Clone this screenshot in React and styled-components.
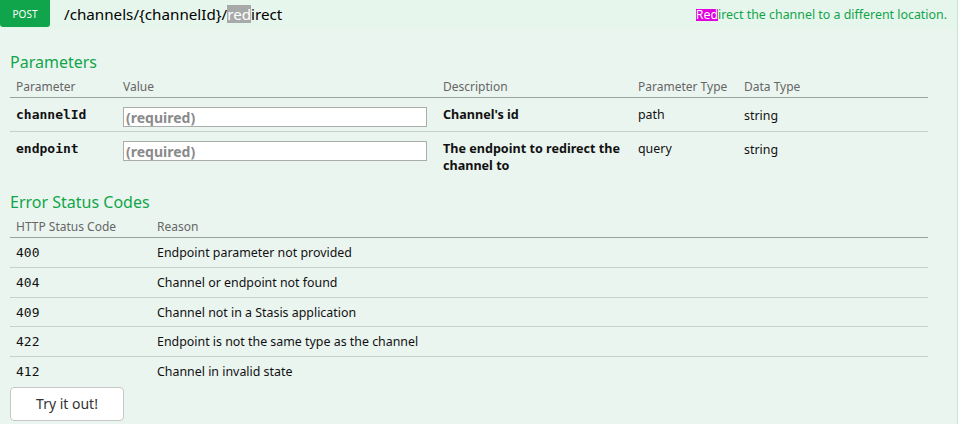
import React from 'react';
import styled, { createGlobalStyle } from 'styled-components';

const GlobalStyle = createGlobalStyle`
  html, body {
    margin: 0;
    padding: 0;
    background: #ffffff;
    font-family: "Noto Sans", "Open Sans", sans-serif;
  }
`;

const green = '#10a54a';

const Operation = styled.div`
  width: 958px;
  height: 424px;
  box-sizing: border-box;
  background: #ebf5f0;
  border-right: 1px solid #c3e8d1;
  overflow: hidden;
`;

const Heading = styled.div`
  display: flex;
  align-items: flex-start;
  height: 29px;
  background: #e7f6ec;
`;

const Method = styled.span`
  display: flex;
  align-items: center;
  justify-content: center;
  width: 50px;
  height: 27px;
  background: ${green};
  color: #ffffff;
  font-size: 10px;
  border-radius: 0 0 3px 3px;
`;

const Path = styled.span`
  margin-left: 14px;
  margin-top: 4px;
  font-size: 15.2px;
  line-height: 21px;
  color: #000;
`;

const Mark = styled.span`
  display: inline-block;
  line-height: ${(p) => p.$h}px;
  background: ${(p) => p.$bg};
  color: #ffffff;
`;

const Summary = styled.span`
  margin-left: auto;
  margin-right: 10px;
  margin-top: 6px;
  font-size: 12.4px;
  line-height: 18px;
  color: ${green};
`;

const Content = styled.div`
  padding: 0 30px 0 10px;
`;

const SectionTitle = styled.h4`
  margin: 0;
  font-size: 16px;
  font-weight: normal;
  line-height: 24px;
  color: ${green};
  padding-top: ${(p) => p.$top}px;
`;

const Table = styled.table`
  width: 918px;
  border-collapse: collapse;
  table-layout: fixed;
`;

const Th = styled.th`
  text-align: left;
  font-weight: normal;
  font-size: 12px;
  color: #666;
  padding: 5px 6px 2px;
  line-height: 16px;
  border-bottom: 1px solid #99a39e;
`;

const Tr = styled.tr`
  border-bottom: ${(p) => (p.$last ? 'none' : '1px solid #c8d0cc')};
`;

const Td = styled.td`
  vertical-align: top;
  padding: ${(p) => p.$pad || '8px 6px 4px'};
  font-size: ${(p) => (p.$bold ? '12.6px' : '12.4px')};
  line-height: ${(p) => p.$lh || 17}px;
  color: #111;
  font-weight: ${(p) => (p.$bold ? 'bold' : 'normal')};
`;

const Code = styled.span`
  font-family: "DejaVu Sans Mono", monospace;
  font-size: 13px;
  font-weight: ${(p) => (p.$bold ? 'bold' : 'normal')};
`;

const Input = styled.input`
  display: block;
  box-sizing: border-box;
  width: 304px;
  height: 20px;
  margin: 1px 0 0;
  padding: 0 2px;
  border: 1px solid #a9aeab;
  background: #fff;
  font-family: "Noto Sans", sans-serif;
  font-size: 14px;
  font-weight: bold;
  &::placeholder {
    color: #8a8a8a;
  }
`;

const Button = styled.button`
  display: block;
  margin-top: 1px;
  width: 114px;
  height: 34px;
  background: #ffffff;
  border: 1px solid #c7c7c7;
  border-radius: 4px;
  font-family: "Noto Sans", sans-serif;
  font-size: 14px;
  color: #333;
`;

const params = [
  { name: 'channelId', desc: "Channel's id", type: 'path', data: 'string' },
  { name: 'endpoint', desc: 'The endpoint to redirect the channel to', type: 'query', data: 'string' },
];

const errors = [
  ['400', 'Endpoint parameter not provided'],
  ['404', 'Channel or endpoint not found'],
  ['409', 'Channel not in a Stasis application'],
  ['422', 'Endpoint is not the same type as the channel'],
  ['412', 'Channel in invalid state'],
];

export default function App() {
  return (
    <>
      <GlobalStyle />
      <Operation>
        <Heading>
          <Method>POST</Method>
          <Path>
            /channels/{'{channelId}'}/<Mark $bg="#a8aaa9" $h={18}>red</Mark>irect
          </Path>
          <Summary>
            <Mark $bg="#e000e0" $h={12}>Red</Mark>irect the channel to a different location.
          </Summary>
        </Heading>
        <Content>
          <SectionTitle $top={21}>Parameters</SectionTitle>
          <Table>
            <colgroup>
              <col style={{ width: 107 }} />
              <col style={{ width: 320 }} />
              <col style={{ width: 195 }} />
              <col style={{ width: 106 }} />
              <col />
            </colgroup>
            <thead>
              <tr>
                <Th>Parameter</Th>
                <Th>Value</Th>
                <Th>Description</Th>
                <Th>Parameter Type</Th>
                <Th>Data Type</Th>
              </tr>
            </thead>
            <tbody>
              {params.map((p, i) => (
                <Tr key={p.name} $last={i === params.length - 1}>
                  <Td><Code $bold>{p.name}</Code></Td>
                  <Td><Input placeholder="(required)" /></Td>
                  <Td $bold>{p.desc}</Td>
                  <Td>{p.type}</Td>
                  <Td $pad="9px 6px 4px">{p.data}</Td>
                </Tr>
              ))}
            </tbody>
          </Table>
          <SectionTitle $top={12}>Error Status Codes</SectionTitle>
          <Table>
            <colgroup>
              <col style={{ width: 141 }} />
              <col />
            </colgroup>
            <thead>
              <tr>
                <Th>HTTP Status Code</Th>
                <Th>Reason</Th>
              </tr>
            </thead>
            <tbody>
              {errors.map(([code, reason], i) => (
                <Tr key={code} $last={i === errors.length - 1}>
                  <Td $pad="7px 6px 5px" $lh={16.75}><Code>{code}</Code></Td>
                  <Td $pad="7px 6px 5px" $lh={16.75}>{reason}</Td>
                </Tr>
              ))}
            </tbody>
          </Table>
          <Button>Try it out!</Button>
        </Content>
      </Operation>
    </>
  );
}
